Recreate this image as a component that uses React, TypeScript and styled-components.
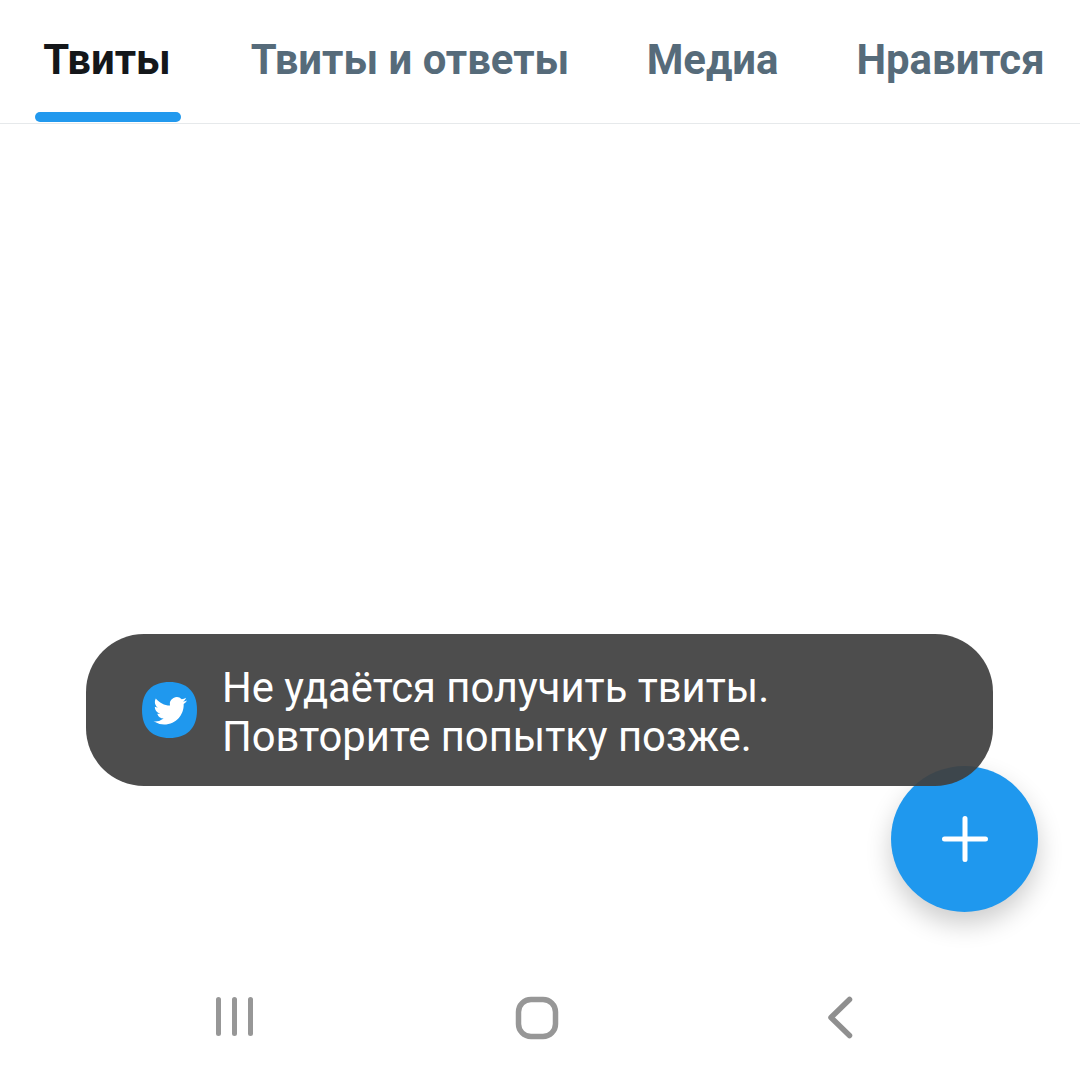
import React from "react";
import styled, { createGlobalStyle } from "styled-components";

const Global = createGlobalStyle`
  html, body { margin: 0; padding: 0; background: #fff; }
  body { font-family: Roboto, "Liberation Sans", sans-serif; }
`;

const Page = styled.div`
  position: relative;
  width: 1080px;
  height: 1080px;
  display: flex;
  flex-direction: column;
  background: #fff;
  overflow: hidden;
`;

const TabBar = styled.nav`
  height: 123px;
  flex: none;
  display: flex;
  align-items: flex-start;
  padding-left: 35px;
  border-bottom: 1px solid #e6e9eb;
  box-sizing: content-box;
`;

const Tab = styled.div<{ $active?: boolean; $left: number; $width: number }>`
  position: relative;
  margin-left: ${(p) => p.$left}px;
  width: ${(p) => p.$width}px;
  height: 123px;
  padding-top: 36px;
  box-sizing: border-box;
  display: flex;
  justify-content: center;
  white-space: nowrap;
  font-size: 41.9px;
  line-height: 48px;
  font-weight: 700;
  color: ${(p) => (p.$active ? "#14171a" : "#566b7a")};
`;

const Indicator = styled.span`
  position: absolute;
  left: 0;
  right: -2px;
  bottom: 1px;
  height: 10px;
  border-radius: 5px;
  background: #2299ee;
`;

const Body = styled.main`
  flex: 1;
`;

const NavBar = styled.footer`
  height: 126px;
  flex: none;
  display: flex;
  align-items: flex-start;
  padding-top: 42px;
  box-sizing: border-box;
`;

const NavSlot = styled.div<{ $left: number }>`
  margin-left: ${(p) => p.$left}px;
  display: flex;
`;

const Toast = styled.div`
  position: absolute;
  left: 86px;
  top: 634px;
  width: 907px;
  height: 152px;
  padding-left: 56px;
  box-sizing: border-box;
  display: flex;
  align-items: center;
  gap: 25px;
  border-radius: 58px;
  background: rgba(64, 64, 64, 0.93);
  z-index: 2;
`;

const ToastIcon = styled.svg`
  flex: none;
`;

const ToastText = styled.div`
  color: #fff;
  font-size: 41.75px;
  line-height: 49px;
  font-weight: 400;
  margin-top: 3px;
  white-space: nowrap;
`;

const Fab = styled.div`
  position: absolute;
  left: 891px;
  top: 766px;
  width: 147px;
  height: 146px;
  border-radius: 50%;
  background: #1f98ee;
  box-shadow: 0 12px 26px rgba(0, 0, 0, 0.2);
  display: flex;
  align-items: center;
  justify-content: center;
  z-index: 1;
`;

const tabs = [
  { label: "Твиты", left: 0, width: 144, active: true },
  { label: "Твиты и ответы", left: 72, width: 318 },
  { label: "Медиа", left: 78, width: 131 },
  { label: "Нравится", left: 79, width: 187 },
];

export default function App() {
  return (
    <Page>
      <Global />
      <TabBar>
        {tabs.map((t) => (
          <Tab key={t.label} $active={t.active} $left={t.left} $width={t.width}>
            {t.label}
            {t.active && <Indicator />}
          </Tab>
        ))}
      </TabBar>
      <Body />
      <NavBar>
        <NavSlot $left={215}>
          <svg width="42" height="42" viewBox="0 0 42 42" fill="none" stroke="#979797" strokeWidth="5" strokeLinecap="round">
            <path d="M3.5 3.5V37.5M19.5 3.5V37.5M35.5 3.5V37.5" />
          </svg>
        </NavSlot>
        <NavSlot $left={258}>
          <svg width="44" height="44" viewBox="0 0 44 44" fill="none" stroke="#979797" strokeWidth="5.5">
            <rect x="3.5" y="3.5" width="37" height="37" rx="12.5" />
          </svg>
        </NavSlot>
        <NavSlot $left={268}>
          <svg width="30" height="44" viewBox="0 0 30 44" fill="none" stroke="#8f8f8f" strokeWidth="5.5" strokeLinecap="round" strokeLinejoin="round">
            <path d="M22.5 3.5L4 21.5L22.5 39.5" />
          </svg>
        </NavSlot>
      </NavBar>
      <Fab>
        <svg width="48" height="48" viewBox="0 0 48 48" fill="none" stroke="#fff" strokeWidth="5" strokeLinecap="round">
          <path d="M24 3.5V44.5M3.5 24H44.5" />
        </svg>
      </Fab>
      <Toast>
        <ToastIcon width="55" height="56" viewBox="0 0 55 56">
          <path
            d="M27.5 0C44 0 55 9 55 28C55 47 44 56 27.5 56C11 56 0 47 0 28C0 9 11 0 27.5 0Z"
            fill="#1f98ee"
          />
          <g transform="translate(11.5 12) scale(1.4)">
            <path
              fill="#fff"
              d="M23.95 4.57a10 10 0 0 1-2.82.77 4.96 4.96 0 0 0 2.16-2.72c-.95.55-2 .95-3.12 1.18a4.92 4.92 0 0 0-8.38 4.48C7.69 8.09 4.07 6.13 1.64 3.16a4.82 4.82 0 0 0-.67 2.48c0 1.71.87 3.21 2.19 4.1a4.9 4.9 0 0 1-2.23-.61v.06c0 2.39 1.7 4.38 3.95 4.83a5 5 0 0 1-2.21.08 4.94 4.94 0 0 0 4.6 3.42A9.87 9.87 0 0 1 0 19.54a14 14 0 0 0 7.56 2.21c9.05 0 14-7.5 14-13.98 0-.21 0-.42-.02-.63a9.94 9.94 0 0 0 2.46-2.55l-.05-.02Z"
            />
          </g>
        </ToastIcon>
        <ToastText>
          Не удаётся получить твиты.
          <br />
          Повторите попытку позже.
        </ToastText>
      </Toast>
    </Page>
  );
}
